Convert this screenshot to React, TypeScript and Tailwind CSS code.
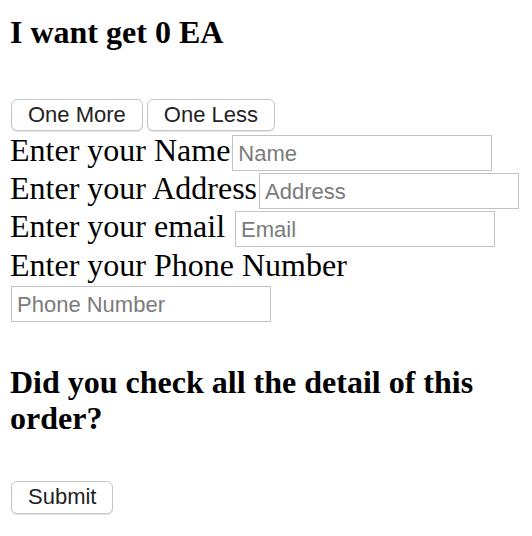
import React, { useState } from 'react';

const inputCls =
  "w-[260px] h-[36px] border border-[#c3c3c3] bg-white px-[5px] pt-[2px] pb-0 text-[22px] font-['Liberation_Sans',sans-serif] text-black placeholder:text-[#7b7b7b] outline-none";

const btnCls =
  "px-[16px] border border-[#c6c6c6] rounded-[6px] bg-white text-[22px] leading-none text-[#222] font-['Liberation_Sans',sans-serif] shadow-[0_1px_1px_rgba(0,0,0,0.12)]";

const App: React.FC = () => {
  const [count, setCount] = useState(0);

  return (
    <div className="min-h-screen bg-white px-[10px] text-black font-['Liberation_Serif',serif]">
      <h3 className="pt-[14px] text-[32px] font-bold leading-[1.15]">I want get {count} EA</h3>

      <div className="mt-[48px] flex gap-[4px] pl-[1px]">
        <button className={`${btnCls} h-[32px]`} onClick={() => setCount(count + 1)}>One More</button>
        <button className={`${btnCls} h-[32px]`} onClick={() => setCount(Math.max(0, count - 1))}>One Less</button>
      </div>

      {/* order form rows */}
      <div className="mt-[2px] text-[32px] leading-[34px]">
        <div className="flex h-[38px] items-baseline">
          <span>Enter your Name</span>
          <input className={`${inputCls} ml-[2px] mt-[1px]`} placeholder="Name" />
        </div>
        <div className="flex h-[38px] items-baseline">
          <span>Enter your Address</span>
          <input className={`${inputCls} ml-[2px] mt-[1px]`} placeholder="Address" />
        </div>
        <div className="flex h-[38px] items-baseline">
          <span>Enter your email</span>
          <input className={`${inputCls} ml-[10px] mt-[1px]`} placeholder="Email" />
        </div>
        <div className="h-[38px] leading-[36px]">Enter your Phone Number</div>
        <div className="flex h-[38px] items-start pl-[1px]">
          <input className={`${inputCls} mt-[1px]`} placeholder="Phone Number" />
        </div>
      </div>

      <h3 className="mt-[41px] text-[32px] font-bold leading-[36px]">
        Did you check all the detail of this order?
      </h3>

      <div className="mt-[45px] pl-[1px]">
        <button className={`${btnCls} h-[33px]`}>Submit</button>
      </div>
    </div>
  );
};

export default App;
